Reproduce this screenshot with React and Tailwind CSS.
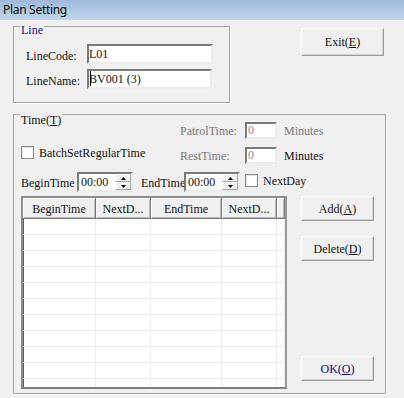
import React from "react";

const sunken =
  "border-2 border-t-[#7a7a7a] border-l-[#7a7a7a] border-b-[#ececec] border-r-[#ececec] bg-white";

function Btn({ className, children }) {
  return (
    <div
      className={
        "flex items-center justify-center bg-[#f0f0f0] border border-t-white border-l-white border-b-[#9a9a9a] border-r-[#9a9a9a] shadow-[inset_-1px_-1px_0_#d2d2d2] " +
        className
      }
    >
      {children}
    </div>
  );
}

function Check() {
  return (
    <div className="w-[13px] h-[13px] shrink-0 border border-[#8e8f8f] bg-white shadow-[inset_1px_1px_0_#e2e2e2,inset_-1px_-1px_0_#f4f4f4]" />
  );
}

function Spin() {
  return (
    <div className={"flex w-[56px] h-[20px] shrink-0 " + sunken}>
      <span className="flex-1 pl-[2px] leading-[16px]">00:00</span>
      <div className="flex flex-col w-[16px]">
        <div className="h-[8px] flex items-center justify-center bg-[#f0f0f0] border border-t-white border-l-white border-b-[#a8a8a8] border-r-[#a8a8a8]">
          <svg width="5" height="3" viewBox="0 0 5 3">
            <path d="M2.5 0 L5 3 L0 3 Z" fill="#000" />
          </svg>
        </div>
        <div className="h-[8px] flex items-center justify-center bg-[#f0f0f0] border border-t-white border-l-white border-b-[#a8a8a8] border-r-[#a8a8a8]">
          <svg width="5" height="3" viewBox="0 0 5 3">
            <path d="M0 0 L5 0 L2.5 3 Z" fill="#000" />
          </svg>
        </div>
      </div>
    </div>
  );
}

const cols = [73, 55, 71, 55, 8];
const heads = ["BeginTime", "NextD...", "EndTime", "NextD...", ""];

export default function App() {
  return (
    <div className="w-[404px] h-[398px] overflow-hidden bg-[#f0f0f0] flex flex-col font-['Liberation_Serif',serif] text-[12px] leading-[14px] text-[#111]">
      <div className="h-[20px] shrink-0 bg-gradient-to-b from-[#9ebad8] to-[#c1d7ee] flex items-center pl-[3px] font-['Noto_Sans',sans-serif] text-[12px] tracking-[-0.3px] text-[#0a0a0a]">
        Plan Setting
      </div>

      <div className="pl-[13px]">
        <div className="flex mt-[6px]">
          <div className="relative w-[217px] h-[77px] border border-[#a5a5a5] shadow-[1px_1px_0_#fff]">
            <span className="absolute left-[6px] top-[-4px] px-[1px] bg-[#f0f0f0] text-[#24108a]">
              Line
            </span>
            <div className="flex items-center mt-[17px] ml-[12px]">
              <span className="w-[61px] pt-[3px]">LineCode:</span>
              <div className={"w-[126px] h-[20px] leading-[16px] " + sunken}>L01</div>
            </div>
            <div className="flex items-center mt-[5px] ml-[12px]">
              <span className="w-[61px] pt-[3px]">LineName:</span>
              <div className={"relative w-[125px] h-[20px] leading-[16px] " + sunken}>
                <span className="absolute left-[1px] top-0 w-[1px] h-[15px] bg-black" />
                BV001 (3)
              </div>
            </div>
          </div>
          <Btn className="ml-[71px] mt-[2px] w-[83px] h-[28px]">
            <span>
              Exit(<span className="underline">E</span>)
            </span>
          </Btn>
        </div>

        <div className="relative mt-[11px] w-[373px] h-[280px] border border-[#a5a5a5] shadow-[1px_1px_0_#fff]">
          <span className="absolute left-[6px] top-[-2px] px-[1px] bg-[#f0f0f0]">
            Time(<span className="underline">T</span>)
          </span>

          <div className="flex mt-[7px]">
            <div className="w-[166px] pl-[7px] pt-[19px] flex items-center">
              <Check />
              <span className="ml-[5px]">BatchSetRegularTime</span>
            </div>
            <div className="flex flex-col">
              <div className="flex items-center">
                <span className="w-[65px] text-[#777]">PatrolTime:</span>
                <div className={"w-[32px] h-[17px] leading-[13px] pl-[1px] text-[#888] " + sunken}>0</div>
                <span className="ml-[7px] text-[#7a7a7a]">Minutes</span>
              </div>
              <div className="flex items-center mt-[8px]">
                <span className="w-[65px] text-[#777]">RestTime:</span>
                <div className={"w-[32px] h-[17px] leading-[13px] pl-[1px] text-[#888] " + sunken}>0</div>
                <span className="ml-[7px]">Minutes</span>
              </div>
            </div>
          </div>

          <div className="flex items-center mt-[8px] pl-[7px]">
            <span className="w-[56px] pt-[2px]">BeginTime</span>
            <Spin />
            <span className="ml-[8px] w-[43px] pt-[2px]">EndTime</span>
            <Spin />
            <div className="ml-[5px] mt-[-3px]">
              <Check />
            </div>
            <span className="ml-[5px] pb-[2px]">NextDay</span>
          </div>

          <div className="flex mt-[4px] pl-[7px]">
            <div className="w-[266px] h-[193px] overflow-hidden bg-white border-2 border-t-[#8c8c8c] border-l-[#8c8c8c] border-b-[#7d7d7d] border-r-[#9a9a9a] shadow-[inset_1px_1px_0_#5f5f5f]">
              <div className="flex h-[21px]">
                {cols.map((w, i) => (
                  <div
                    key={i}
                    style={{ width: w }}
                    className="shrink-0 flex items-center justify-center bg-[#f0f0f0] border-r border-b border-[#7a7a7a] shadow-[inset_1px_1px_0_#fff,inset_-1px_-1px_0_#bdbdbd] pt-[1px]"
                  >
                    {heads[i]}
                  </div>
                ))}
              </div>
              {Array.from({ length: 11 }).map((_, r) => (
                <div key={r} className="flex h-[16px]">
                  {cols.map((w, i) => (
                    <div
                      key={i}
                      style={{ width: w }}
                      className="shrink-0 border-r border-b border-[#ececec]"
                    />
                  ))}
                </div>
              ))}
            </div>

            <div className="flex flex-col ml-[14px]">
              <Btn className="w-[73px] h-[25px]">
                <span>
                  Add(<span className="underline">A</span>)
                </span>
              </Btn>
              <Btn className="w-[73px] h-[25px] mt-[15px]">
                <span>
                  Delete(<span className="underline">D</span>)
                </span>
              </Btn>
              <Btn className="w-[73px] h-[25px] mt-[95px] text-[#0c0c7a]">
                <span>
                  OK(<span className="underline">O</span>)
                </span>
              </Btn>
            </div>
          </div>
        </div>
      </div>
    </div>
  );
}
